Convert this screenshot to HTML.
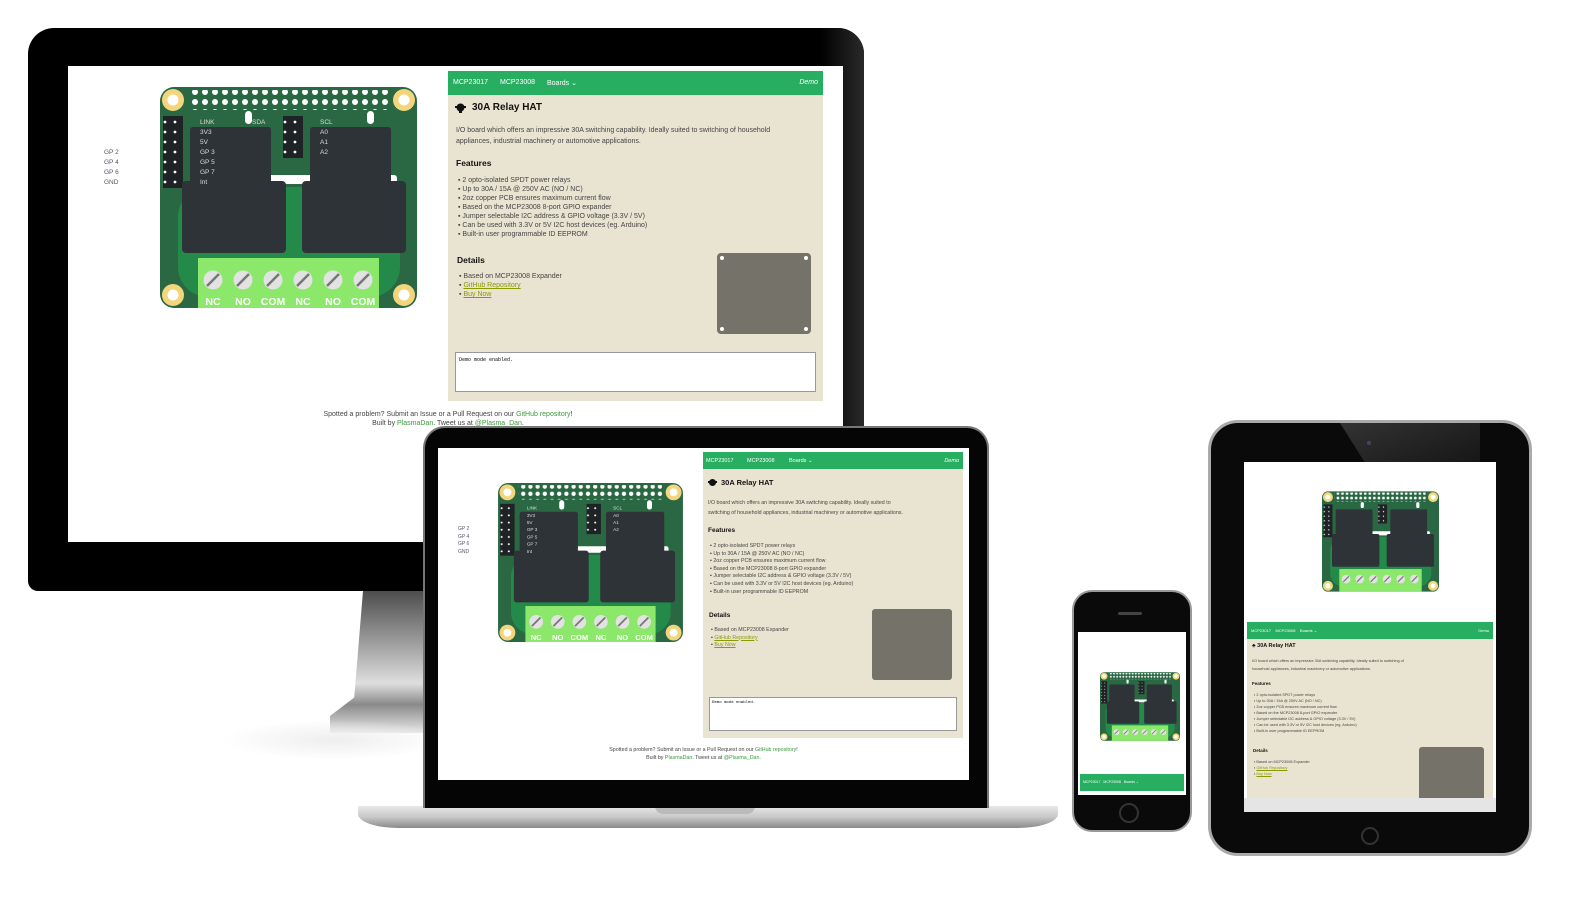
<!DOCTYPE html>
<html><head><meta charset="utf-8"><style>
*{margin:0;padding:0;box-sizing:border-box}
body{width:1578px;height:924px;background:#fff;position:relative;overflow:hidden;font-family:"Liberation Sans",sans-serif}
.a{position:absolute}
.site{position:absolute;background:#fff;overflow:hidden}
.panel{position:absolute;background:#e9e4d1}
.nav{position:absolute;left:0;top:0;right:0;background:#27ae60;color:#fff}
.nav span{position:absolute;white-space:nowrap}
.t{position:absolute;white-space:nowrap;color:#333}
ul{list-style:none}
.lk{color:#8a9a00;text-decoration:underline}
.gl{color:#3a9a3a}
</style></head><body>
<svg width="0" height="0" style="position:absolute">
<defs>
<pattern id="pp" width="10" height="10" patternUnits="userSpaceOnUse"><circle cx="5" cy="5" r="3" fill="#fff"/></pattern>
<pattern id="hp" width="10" height="10" patternUnits="userSpaceOnUse"><circle cx="5" cy="5" r="1.4" fill="#fff"/></pattern>
<symbol id="b" viewBox="0 0 257 221">
<rect width="257" height="221" rx="14" fill="#2a6843"/>
<rect x="18" y="100" width="222" height="110" rx="30" fill="#248a49"/>
<rect x="28" y="3" width="200" height="20" fill="url(#pp)"/>
<g fill="#f3d67c"><circle cx="13" cy="13" r="11"/><circle cx="244" cy="13" r="11"/><circle cx="13" cy="208" r="11"/><circle cx="244" cy="208" r="11"/></g>
<g fill="#fff"><circle cx="13" cy="13" r="5.5"/><circle cx="244" cy="13" r="5.5"/><circle cx="13" cy="208" r="5.5"/><circle cx="244" cy="208" r="5.5"/>
<rect x="85" y="24" width="7" height="13" rx="3.5"/><rect x="207" y="24" width="7" height="13" rx="3.5"/>
<rect x="33" y="88" width="204" height="9" rx="3"/></g>
<rect x="3" y="29" width="20" height="72" fill="#1f2326"/><rect x="3" y="30" width="20" height="70" fill="url(#hp)"/>
<rect x="123" y="29" width="20" height="42" fill="#1f2326"/><rect x="123" y="30" width="20" height="40" fill="url(#hp)"/>
<g fill="#2d3337">
<rect x="30" y="40" width="81" height="80" rx="3"/><rect x="22" y="94" width="104" height="72" rx="4"/>
<rect x="150" y="40" width="81" height="80" rx="3"/><rect x="142" y="94" width="104" height="72" rx="4"/>
</g>
<rect x="38" y="171" width="181" height="50" fill="#8be86a"/>
<g stroke="#777" stroke-width="2.5">
<circle cx="53" cy="193" r="9.5" fill="#e2e2e2" stroke="none"/><line x1="47" y1="199" x2="59" y2="187"/>
<circle cx="83" cy="193" r="9.5" fill="#e2e2e2" stroke="none"/><line x1="77" y1="199" x2="89" y2="187"/>
<circle cx="113" cy="193" r="9.5" fill="#e2e2e2" stroke="none"/><line x1="107" y1="199" x2="119" y2="187"/>
<circle cx="143" cy="193" r="9.5" fill="#e2e2e2" stroke="none"/><line x1="137" y1="199" x2="149" y2="187"/>
<circle cx="173" cy="193" r="9.5" fill="#e2e2e2" stroke="none"/><line x1="167" y1="199" x2="179" y2="187"/>
<circle cx="203" cy="193" r="9.5" fill="#e2e2e2" stroke="none"/><line x1="197" y1="199" x2="209" y2="187"/>
</g>
</symbol>
</defs></svg>

<!-- MONITOR -->
<div class="a" style="left:28px;top:28px;width:836px;height:563px;background:#000;border-radius:26px 26px 10px 10px"></div>
<div class="a" style="left:820px;top:28px;width:44px;height:400px;background:linear-gradient(90deg,#000,#2a2a2a);border-radius:0 26px 0 0"></div>
<div class="a" style="left:330px;top:591px;width:110px;height:142px;background:linear-gradient(#4d4d4d,#9a9a9a 35%,#dedede 65%,#8a8a8a 80%,#e8e8e8);clip-path:polygon(30% 0,100% 0,100% 100%,0 100%,0 88%,22% 75%)"></div>
<div class="a" style="left:220px;top:720px;width:230px;height:40px;border-radius:50%;background:radial-gradient(#eee,rgba(255,255,255,0) 70%)"></div>

<div class="site" style="left:68px;top:66px;width:775px;height:476px">
 <div class="t" style="left:36px;top:82px;font-size:6.5px;line-height:10px;color:#556">GP 2<br>GP 4<br>GP 6<br>GND</div>
 <svg class="a" style="left:92px;top:21px" width="257" height="221"><use href="#b"/>
  <g font-family="Liberation Sans" font-size="6.5" fill="#ddd"><text x="40" y="37">LINK</text><text x="40" y="47">3V3</text><text x="40" y="57">5V</text><text x="40" y="67">GP 3</text><text x="40" y="77">GP 5</text><text x="40" y="87">GP 7</text><text x="40" y="97">Int</text>
  <text x="92" y="37">SDA</text><text x="160" y="37">SCL</text><text x="160" y="47">A0</text><text x="160" y="57">A1</text><text x="160" y="67">A2</text></g>
  <g font-family="Liberation Sans" font-size="10.5" font-weight="bold" fill="#fff" text-anchor="middle"><text x="53" y="218">NC</text><text x="83" y="218">NO</text><text x="113" y="218">COM</text><text x="143" y="218">NC</text><text x="173" y="218">NO</text><text x="203" y="218">COM</text></g>
 </svg>
 <div class="panel" style="left:380px;top:5px;width:375px;height:330px">
  <div class="nav" style="height:24px;font-size:7px"><span style="left:5px;top:8px">MCP23017</span><span style="left:52px;top:8px">MCP23008</span><span style="left:99px;top:8px">Boards ⌄</span><span style="right:5px;top:8px;font-style:italic">Demo</span></div>
  <svg class="a" style="left:7px;top:31px" width="11" height="11"><circle cx="5.5" cy="5.5" r="4" fill="#111"/><rect x="0" y="4" width="11" height="2" fill="#111"/><rect x="4" y="8" width="3" height="3" fill="#111"/></svg>
  <div class="t" style="left:24px;top:31px;font-size:10px;font-weight:bold;color:#111">30A Relay HAT</div>
  <div class="t" style="left:8px;top:54px;font-size:7px;line-height:11px;color:#444">I/O board which offers an impressive 30A switching capability. Ideally suited to switching of household<br>appliances, industrial machinery or automotive applications.</div>
  <div class="t" style="left:8px;top:87px;font-size:8.5px;font-weight:bold;color:#111">Features</div>
  <ul class="t" style="left:10px;top:105px;font-size:7px;line-height:9px;color:#444"><li>▪ 2 opto-isolated SPDT power relays</li><li>▪ Up to 30A / 15A @ 250V AC (NO / NC)</li><li>▪ 2oz copper PCB ensures maximum current flow</li><li>▪ Based on the MCP23008 8-port GPIO expander</li><li>▪ Jumper selectable I2C address &amp; GPIO voltage (3.3V / 5V)</li><li>▪ Can be used with 3.3V or 5V I2C host devices (eg. Arduino)</li><li>▪ Built-in user programmable ID EEPROM</li></ul>
  <div class="t" style="left:9px;top:184px;font-size:8.5px;font-weight:bold;color:#111">Details</div>
  <ul class="t" style="left:11px;top:201px;font-size:7px;line-height:9px;color:#444"><li>▪ Based on MCP23008 Expander</li><li>▪ <span class="lk">GitHub Repository</span></li><li>▪ <span class="lk">Buy Now</span></li></ul>
  <div class="a" style="left:269px;top:182px;width:94px;height:81px;background:#75726a;border-radius:4px"><i class="a" style="left:3px;top:3px;width:4px;height:4px;border-radius:2px;background:#fff"></i><i class="a" style="right:3px;top:3px;width:4px;height:4px;border-radius:2px;background:#fff"></i><i class="a" style="left:3px;bottom:3px;width:4px;height:4px;border-radius:2px;background:#fff"></i><i class="a" style="right:3px;bottom:3px;width:4px;height:4px;border-radius:2px;background:#fff"></i></div>
  <div class="a" style="left:7px;top:281px;width:361px;height:40px;background:#fff;border:1px solid #999;font-family:'Liberation Mono',monospace;font-size:5px;padding:4px 3px">Demo mode enabled.</div>
 </div>
 <div class="t" style="left:0;width:760px;text-align:center;top:344px;font-size:7px;line-height:9px;color:#444">Spotted a problem? Submit an Issue or a Pull Request on our <span class="gl">GitHub repository</span>!<br>Built by <span class="gl">PlasmaDan</span>. Tweet us at <span class="gl">@Plasma_Dan</span>.</div>
</div>

<!-- LAPTOP -->
<div class="a" style="left:358px;top:806px;width:700px;height:22px;background:linear-gradient(#e8e8e8,#c8c8c8 50%,#8a8a8a);border-radius:2px 2px 40px 40px/2px 2px 14px 14px"></div>
<div class="a" style="left:655px;top:806px;width:100px;height:8px;background:#bbb;border-radius:0 0 8px 8px"></div>
<div class="a" style="left:423px;top:426px;width:566px;height:382px;background:#050505;border-radius:22px 22px 0 0;border:2px solid #777;border-bottom:none"></div>
<div class="site" style="left:438px;top:448px;width:531px;height:332px">
 <div class="t" style="left:20px;top:78px;font-size:5px;line-height:7.5px;color:#556">GP 2<br>GP 4<br>GP 6<br>GND</div>
 <svg class="a" style="left:60px;top:35px" width="185" height="159" viewBox="0 0 257 221"><use href="#b"/>
  <g font-family="Liberation Sans" font-size="6.5" fill="#ddd"><text x="40" y="37">LINK</text><text x="40" y="47">3V3</text><text x="40" y="57">5V</text><text x="40" y="67">GP 3</text><text x="40" y="77">GP 5</text><text x="40" y="87">GP 7</text><text x="40" y="97">Int</text><text x="160" y="37">SCL</text><text x="160" y="47">A0</text><text x="160" y="57">A1</text><text x="160" y="67">A2</text></g>
  <g font-family="Liberation Sans" font-size="10.5" font-weight="bold" fill="#fff" text-anchor="middle"><text x="53" y="218">NC</text><text x="83" y="218">NO</text><text x="113" y="218">COM</text><text x="143" y="218">NC</text><text x="173" y="218">NO</text><text x="203" y="218">COM</text></g>
 </svg>
 <div class="panel" style="left:265px;top:4px;width:260px;height:286px">
  <div class="nav" style="height:17px;font-size:5.5px"><span style="left:3px;top:6px">MCP23017</span><span style="left:44px;top:6px">MCP23008</span><span style="left:86px;top:6px">Boards ⌄</span><span style="right:4px;top:6px;font-style:italic">Demo</span></div>
  <svg class="a" style="left:5px;top:26px" width="9" height="9"><circle cx="4.5" cy="4.5" r="3.5" fill="#111"/><rect x="0" y="3" width="9" height="2" fill="#111"/></svg>
  <div class="t" style="left:18px;top:26px;font-size:7.5px;font-weight:bold;color:#111">30A Relay HAT</div>
  <div class="t" style="left:5px;top:46px;font-size:5.3px;line-height:10px;color:#444">I/O board which offers an impressive 30A switching capability. Ideally suited to<br>switching of household appliances, industrial machinery or automotive applications.</div>
  <div class="t" style="left:5px;top:75px;font-size:6.5px;font-weight:bold;color:#111">Features</div>
  <ul class="t" style="left:7px;top:91px;font-size:5.3px;line-height:7.6px;color:#444"><li>▪ 2 opto-isolated SPDT power relays</li><li>▪ Up to 30A / 15A @ 250V AC (NO / NC)</li><li>▪ 2oz copper PCB ensures maximum current flow</li><li>▪ Based on the MCP23008 8-port GPIO expander</li><li>▪ Jumper selectable I2C address &amp; GPIO voltage (3.3V / 5V)</li><li>▪ Can be used with 3.3V or 5V I2C host devices (eg. Arduino)</li><li>▪ Built-in user programmable ID EEPROM</li></ul>
  <div class="t" style="left:6px;top:160px;font-size:6.5px;font-weight:bold;color:#111">Details</div>
  <ul class="t" style="left:8px;top:175px;font-size:5.3px;line-height:7.6px;color:#444"><li>▪ Based on MCP23008 Expander</li><li>▪ <span class="lk">GitHub Repository</span></li><li>▪ <span class="lk">Buy Now</span></li></ul>
  <div class="a" style="left:169px;top:157px;width:80px;height:71px;background:#75726a;border-radius:3px"></div>
  <div class="a" style="left:6px;top:245px;width:248px;height:34px;background:#fff;border:1px solid #999;font-family:'Liberation Mono',monospace;font-size:4px;padding:3px 2px">Demo mode enabled.</div>
 </div>
 <div class="t" style="left:0;width:531px;text-align:center;top:298px;font-size:5.3px;line-height:8px;color:#444">Spotted a problem? Submit an Issue or a Pull Request on our <span class="gl">GitHub repository</span>!<br>Built by <span class="gl">PlasmaDan</span>. Tweet us at <span class="gl">@Plasma_Dan</span>.</div>
</div>

<!-- PHONE -->
<div class="a" style="left:1072px;top:590px;width:120px;height:242px;background:#0a0a0a;border-radius:20px;border:2px solid #999"></div>
<div class="a" style="left:1118px;top:612px;width:24px;height:3px;background:#444;border-radius:2px"></div>
<div class="a" style="left:1119px;top:803px;width:20px;height:20px;border-radius:50%;border:2px solid #333"></div>
<div class="site" style="left:1078px;top:632px;width:108px;height:163px">
 <svg class="a" style="left:22px;top:40px" width="80" height="69" viewBox="0 0 257 221"><use href="#b"/></svg>
 <div class="a" style="left:2px;top:142px;width:104px;height:17px;background:#27ae60;color:#fff;font-size:3.5px;padding:6px 3px;white-space:nowrap">MCP23017 &nbsp; MCP23008 &nbsp; Boards ⌄</div>
</div>

<!-- TABLET -->
<div class="a" style="left:1208px;top:420px;width:324px;height:436px;background:#0a0a0a;border-radius:30px;border:3px solid #aaa"></div>
<div class="a" style="left:1340px;top:423px;width:140px;height:40px;background:linear-gradient(160deg,#333,#161616);clip-path:polygon(0 0,100% 0,100% 100%,18% 100%)"></div>
<div class="a" style="left:1367px;top:441px;width:4px;height:4px;border-radius:50%;background:#446"></div>
<div class="a" style="left:1361px;top:827px;width:18px;height:18px;border-radius:50%;border:2px solid #333"></div>
<div class="site" style="left:1244px;top:462px;width:252px;height:350px">
 <svg class="a" style="left:78px;top:29px" width="117" height="101" viewBox="0 0 257 221"><use href="#b"/></svg>
 <div class="panel" style="left:3px;top:160px;width:246px;height:176px">
  <div class="nav" style="height:17px;font-size:4px"><span style="left:4px;top:6px">MCP23017 &nbsp;&nbsp; MCP23008 &nbsp;&nbsp; Boards ⌄</span><span style="right:4px;top:6px">Demo</span></div>
  <div class="t" style="left:5px;top:21px;font-size:5.5px;font-weight:bold;color:#111">♣ 30A Relay HAT</div>
  <div class="t" style="left:5px;top:35px;font-size:3.8px;line-height:8px;color:#444">I/O board which offers an impressive 30A switching capability. Ideally suited to switching of<br>household appliances, industrial machinery or automotive applications.</div>
  <div class="t" style="left:5px;top:59px;font-size:4.5px;font-weight:bold;color:#111">Features</div>
  <div class="t" style="left:7px;top:70px;font-size:3.8px;line-height:6px;color:#444">▪ 2 opto-isolated SPDT power relays<br>▪ Up to 30A / 15A @ 250V AC (NO / NC)<br>▪ 2oz copper PCB ensures maximum current flow<br>▪ Based on the MCP23008 8-port GPIO expander<br>▪ Jumper selectable I2C address &amp; GPIO voltage (3.3V / 5V)<br>▪ Can be used with 3.3V or 5V I2C host devices (eg. Arduino)<br>▪ Built-in user programmable ID EEPROM</div>
  <div class="t" style="left:6px;top:126px;font-size:4.5px;font-weight:bold;color:#111">Details</div>
  <div class="t" style="left:7px;top:137px;font-size:3.8px;line-height:6px;color:#444">▪ Based on MCP23008 Expander<br>▪ <span class="lk">GitHub Repository</span><br>▪ <span class="lk">Buy Now</span></div>
  <div class="a" style="left:172px;top:125px;width:65px;height:51px;background:#75726a;border-radius:3px 3px 0 0"></div>
 </div>
 <div class="a" style="left:0;top:336px;width:252px;height:14px;background:#e5e5e5"></div>
</div>
</body></html>
